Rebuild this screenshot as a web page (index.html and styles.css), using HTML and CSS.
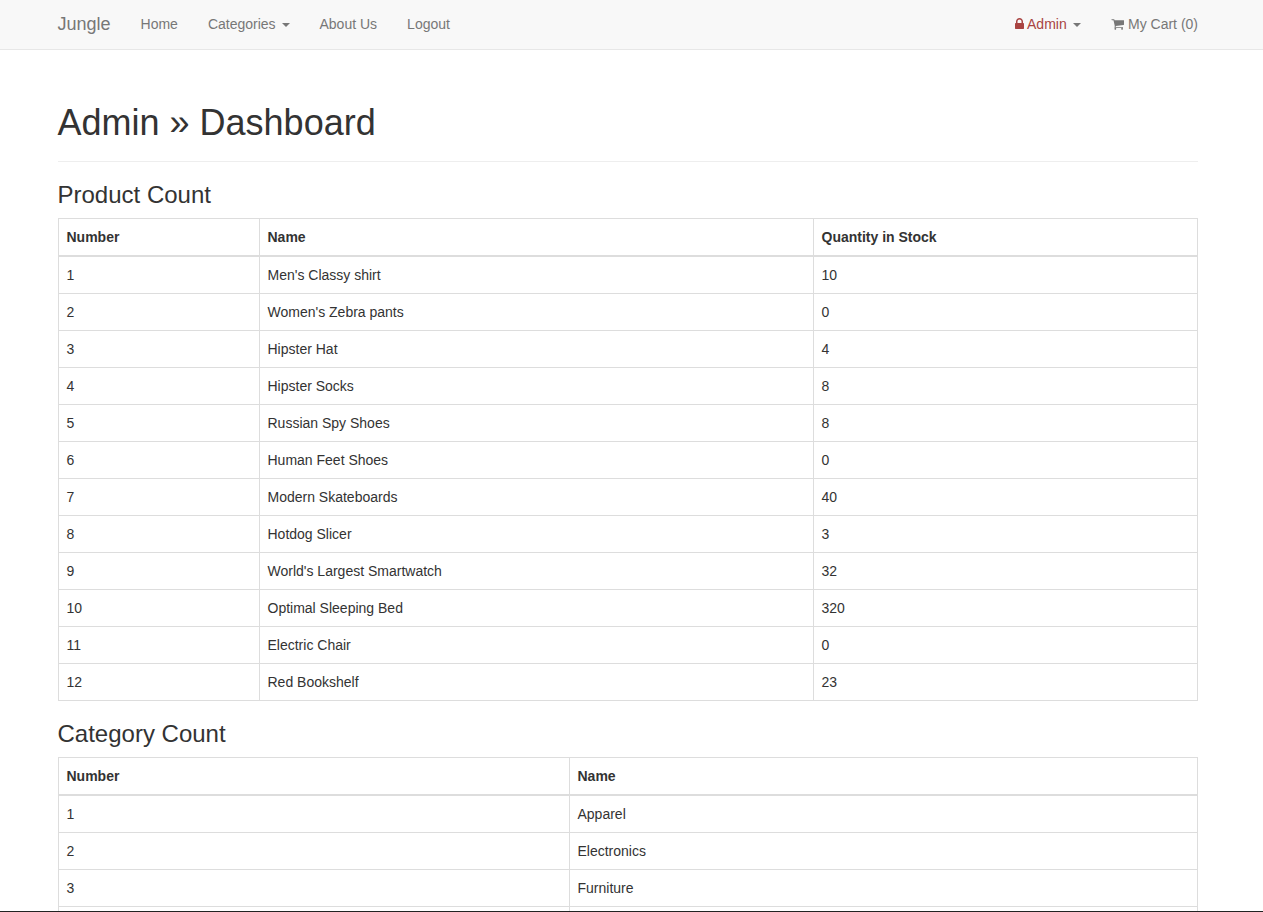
FILE: index.html
```html
<!DOCTYPE html>
<html lang="en">
<head>
    <meta charset="UTF-8">
    <title>Jungle</title>
    <link rel="stylesheet" href="styles.css">
</head>
<body>
    <div class="page">
        <nav class="navbar">
            <div class="container navbar-inner">
                <a class="brand" href="#">Jungle</a>
                <ul class="nav">
                    <li><a href="#">Home</a></li>
                    <li><a href="#">Categories <span class="caret"></span></a></li>
                    <li><a href="#">About Us</a></li>
                    <li><a href="#">Logout</a></li>
                </ul>
                <ul class="nav nav-right">
                    <li>
                        <a href="#" class="admin-link">
                            <svg class="icon icon-lock" viewBox="0 0 1152 1792" aria-hidden="true"><path d="M320 768h512v-192q0-106-75-181t-181-75-181 75-75 181v192zm832 96v576q0 40-28 68t-68 28h-960q-40 0-68-28t-28-68v-576q0-40 28-68t68-28h32v-192q0-184 132-316t316-132 316 132 132 316v192h32q40 0 68 28t28 68z"/></svg>
                            Admin <span class="caret"></span>
                        </a>
                    </li>
                    <li>
                        <a href="#">
                            <svg class="icon icon-cart" viewBox="0 0 1728 1792" aria-hidden="true"><path d="M704 1536q0 52-38 90t-90 38-90-38-38-90 38-90 90-38 90 38 38 90zm896 0q0 52-38 90t-90 38-90-38-38-90 38-90 90-38 90 38 38 90zm128-1088v512q0 24-16.500 42.500t-40.500 21.500l-1044 122q13 60 13 70 0 16-24 64h920q26 0 45 19t19 45-19 45-45 19h-1024q-26 0-45-19t-19-45q0-11 8-31.500t16-36 21.500-40 15.500-29.500l-177-823h-204q-26 0-45-19t-19-45 19-45 45-19h256q16 0 28.500 6.500t19.500 15.500 13 24.500 8 26 5.500 29.500 4.500 26h1201q26 0 45 19t19 45z"/></svg>
                            My Cart (0)
                        </a>
                    </li>
                </ul>
            </div>
        </nav>

        <main class="container content">
            <header class="page-header">
                <h1>Admin » Dashboard</h1>
            </header>

            <h3>Product Count</h3>
            <table class="table">
                <colgroup>
                    <col class="col-number">
                    <col class="col-product">
                    <col>
                </colgroup>
                <thead>
                    <tr><th>Number</th><th>Name</th><th>Quantity in Stock</th></tr>
                </thead>
                <tbody>
                    <tr><td>1</td><td>Men's Classy shirt</td><td>10</td></tr>
                    <tr><td>2</td><td>Women's Zebra pants</td><td>0</td></tr>
                    <tr><td>3</td><td>Hipster Hat</td><td>4</td></tr>
                    <tr><td>4</td><td>Hipster Socks</td><td>8</td></tr>
                    <tr><td>5</td><td>Russian Spy Shoes</td><td>8</td></tr>
                    <tr><td>6</td><td>Human Feet Shoes</td><td>0</td></tr>
                    <tr><td>7</td><td>Modern Skateboards</td><td>40</td></tr>
                    <tr><td>8</td><td>Hotdog Slicer</td><td>3</td></tr>
                    <tr><td>9</td><td>World's Largest Smartwatch</td><td>32</td></tr>
                    <tr><td>10</td><td>Optimal Sleeping Bed</td><td>320</td></tr>
                    <tr><td>11</td><td>Electric Chair</td><td>0</td></tr>
                    <tr><td>12</td><td>Red Bookshelf</td><td>23</td></tr>
                </tbody>
            </table>

            <h3>Category Count</h3>
            <table class="table">
                <colgroup>
                    <col class="col-category">
                    <col>
                </colgroup>
                <thead>
                    <tr><th>Number</th><th>Name</th></tr>
                </thead>
                <tbody>
                    <tr><td>1</td><td>Apparel</td></tr>
                    <tr><td>2</td><td>Electronics</td></tr>
                    <tr><td>3</td><td>Furniture</td></tr>
                    <tr><td>&nbsp;</td><td>&nbsp;</td></tr>
                </tbody>
            </table>
        </main>

        <div class="bottom-line"></div>
    </div>
</body>
</html>
```

FILE: styles.css
```css
* {
    box-sizing: border-box;
}

html, body {
    height: 100%;
    margin: 0;
}

body {
    font-family: "Liberation Sans", Arial, sans-serif;
    font-size: 14px;
    line-height: 20px;
    color: #333;
    background-color: #fff;
}

a {
    color: inherit;
    text-decoration: none;
}

.page {
    display: flex;
    flex-direction: column;
    height: 100vh;
    overflow: hidden;
}

.container {
    width: 1170px;
    margin-left: 42.5px;
    padding: 0 15px;
}

/* navbar */
.navbar {
    flex: none;
    height: 50px;
    background-color: #f8f8f8;
    border-bottom: 1px solid #e7e7e7;
    color: #777;
}

.navbar-inner {
    display: flex;
    height: 100%;
}

.brand {
    margin-left: -15px;
    padding: 14px 15px;
    font-size: 18px;
}

.nav {
    display: flex;
    margin: 0;
    padding: 0;
    list-style: none;
}

.nav a {
    display: block;
    padding: 14px 15px;
}

.nav-right {
    margin-left: auto;
    margin-right: -15.5px;
}

.nav .admin-link {
    color: #a94442;
}

.admin-link .caret {
    color: #777;
}

.caret {
    display: inline-block;
    width: 0;
    height: 0;
    margin-left: 2px;
    vertical-align: middle;
    border-top: 4px solid;
    border-right: 4px solid transparent;
    border-left: 4px solid transparent;
}

.icon {
    height: 14px;
    fill: currentColor;
    vertical-align: -2px;
}

.icon-lock {
    width: 9px;
}

.icon-cart {
    width: 13px;
    margin-right: 0.5px;
}

/* content */
.content {
    flex: 1;
    min-height: 0;
    overflow: hidden;
    padding-top: 53px;
}

.page-header {
    margin-bottom: 20px;
    padding-bottom: 9px;
    border-bottom: 1px solid #eee;
}

h1 {
    margin: 0 0 9px;
    font-size: 36px;
    font-weight: 500;
    line-height: 1.1;
}

h3 {
    margin: 20px 0 10px;
    font-size: 24px;
    font-weight: 500;
    line-height: 1.1;
}

.page-header + h3 {
    margin-top: 0;
}

.table {
    width: 100%;
    margin-bottom: 20px;
    table-layout: fixed;
    border-collapse: collapse;
    border: 1px solid #ddd;
}

.table th, .table td {
    padding: 8px;
    text-align: left;
    border: 1px solid #ddd;
}

.table th {
    border-bottom-width: 2px;
}

.col-number {
    width: 201px;
}

.col-product {
    width: 554px;
}

.col-category {
    width: 511px;
}

.bottom-line {
    flex: none;
    height: 1px;
    background-color: #222;
}
```
